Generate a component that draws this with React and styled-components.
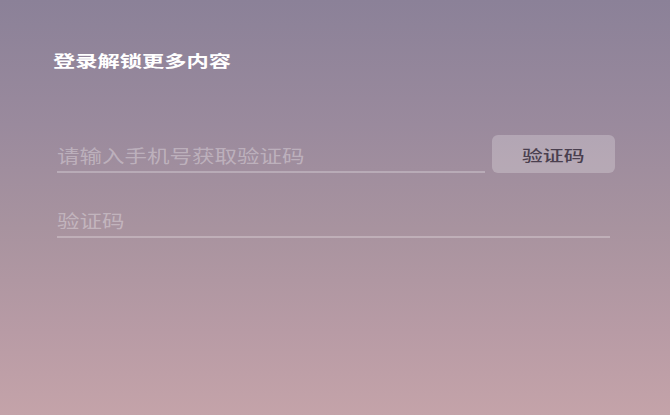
import styled, { createGlobalStyle } from "styled-components";

const GlobalStyle = createGlobalStyle`
  html, body {
    margin: 0;
    padding: 0;
  }
  body {
    font-family: "Noto Sans CJK SC", "Noto Sans", sans-serif;
  }
`;

export default function App() {
  return (
    <>
      <GlobalStyle />
      <Page>
        <Title>
          <Wide>登录解锁更多内容</Wide>
        </Title>
        <Form>
          <Row>
            <Field width={428}>
              <Placeholder>请输入手机号获取验证码</Placeholder>
            </Field>
            <CodeButton type="button">
              <Wide>验证码</Wide>
            </CodeButton>
          </Row>
          <Row>
            <Field width={553}>
              <Placeholder>验证码</Placeholder>
            </Field>
          </Row>
        </Form>
      </Page>
    </>
  );
}

const Page = styled.main`
  box-sizing: border-box;
  width: 670px;
  min-height: 415px;
  padding: 52px 0 0 53px;
  background: linear-gradient(
    180deg,
    #8b8198 0%,
    #9a8a9d 30%,
    #a8939f 55%,
    #b89ba5 80%,
    #c4a3a9 100%
  );
  overflow: hidden;
`;

// the source image is stretched sideways, so glyphs are wider than tall
const Wide = styled.span`
  display: inline-block;
  transform: scaleX(1.39);
  transform-origin: left center;
  white-space: nowrap;
`;

const Title = styled.h1`
  margin: 0;
  font-size: 16px;
  line-height: 16px;
  font-weight: 700;
  color: #ffffff;
`;

const Form = styled.div`
  display: flex;
  flex-direction: column;
  gap: 27px;
  margin: 67px 0 0 4px;
`;

const Row = styled.div`
  display: flex;
  align-items: flex-start;
  gap: 7px;
`;

const Field = styled.div`
  box-sizing: border-box;
  width: ${(p) => p.width}px;
  height: 38px;
  padding-top: 9px;
  border-bottom: 2px solid rgba(255, 255, 255, 0.26);
`;

const Placeholder = styled(Wide)`
  font-size: 18px;
  line-height: 18px;
  color: rgba(255, 255, 255, 0.32);
  transform: scaleX(1.25);
`;

const CodeButton = styled.button`
  box-sizing: border-box;
  width: 123px;
  height: 38px;
  padding: 0 0 0 30px;
  border: none;
  border-radius: 6px;
  background: rgba(255, 255, 255, 0.24);
  display: flex;
  align-items: center;
  justify-content: flex-start;
  font-family: "Noto Sans CJK SC", "Noto Sans", sans-serif;
  font-size: 15px;
  font-weight: 500;
  color: #4a3f4f;
  cursor: pointer;
`;
